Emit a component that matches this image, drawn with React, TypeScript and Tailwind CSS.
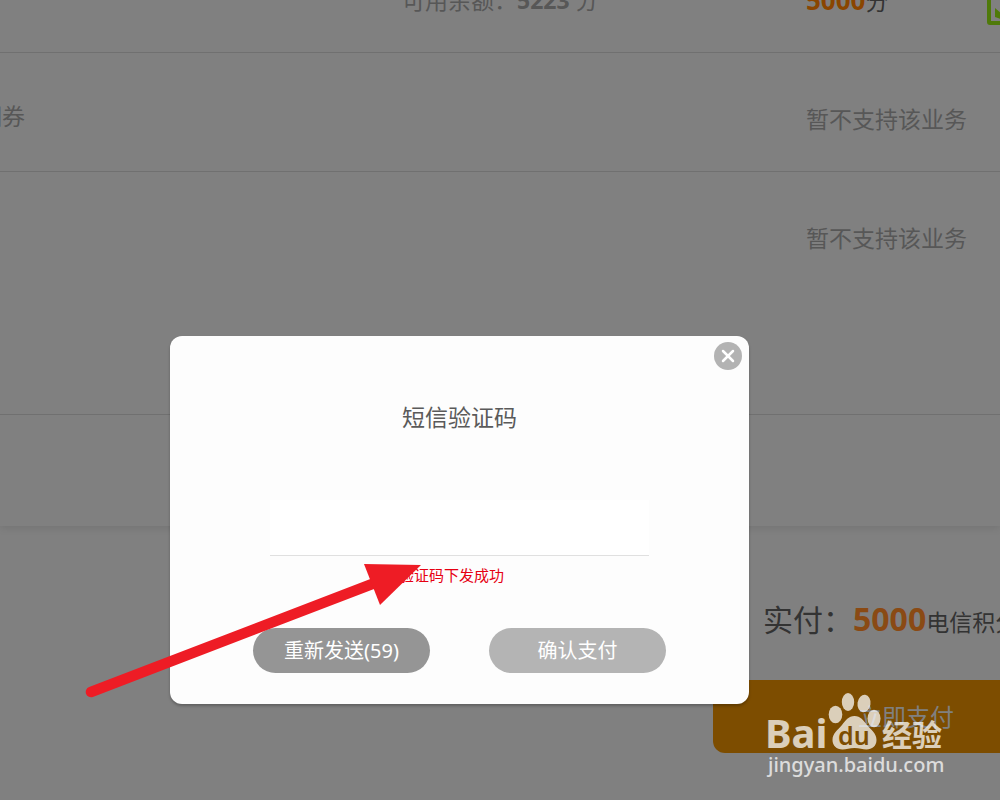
import { X } from 'lucide-react'

const rows = [
  { name: '', balance: '5223', amount: '5000' },
  { name: '期券' },
  { name: '' },
]

function PaymentRow({ name, balance, amount }: { name: string; balance?: string; amount?: string }) {
  return (
    <li className="grid h-[119px] grid-cols-[402px_404px_1fr] border-b border-[#707070] pt-[53px] text-[23px] leading-[26px] text-[#575757] last:h-[243px]">
      <span className="-ml-[21px] -mt-[3px]">{name}</span>
      <span>
        {balance && (
          <>
            可用余额：<strong className="font-bold">{balance}</strong> 分
          </>
        )}
      </span>
      {amount ? (
        <div className="flex items-start justify-between whitespace-nowrap text-[#333]">
          <span>
            <strong className="text-[26px] font-bold text-[#8a4500]">{amount}</strong>分
          </span>
          <label className="relative -mr-[18px] block size-[31px] shrink-0">
            <input
              type="checkbox"
              defaultChecked
              aria-label="使用积分"
              className="mt-[7px] block size-[31px] appearance-none rounded-[3px] border-4 border-[#4f7a0a]"
            />
            <svg viewBox="0 0 31 31" className="pointer-events-none absolute inset-x-0 top-[7px] size-full">
              <path d="M8 14l6 5L26 6v8L14 25l-6-2z" fill="#4f7a0a" />
            </svg>
          </label>
        </div>
      ) : (
        <span className="whitespace-nowrap">暂不支持该业务</span>
      )}
    </li>
  )
}

function SmsDialog() {
  return (
    <form
      role="dialog"
      aria-labelledby="sms-title"
      onSubmit={(e) => e.preventDefault()}
      className="relative w-full max-w-[579px] rounded-xl bg-[#fdfdfd] px-[83px] pb-[31px] pt-[65px] text-center shadow-[0_2px_3px_rgba(0,0,0,0.25)]"
    >
      <button
        type="button"
        aria-label="关闭"
        className="absolute right-[7px] top-[6px] grid size-7 place-items-center rounded-full bg-[#b3b3b3] text-white"
      >
        <X size={20} strokeWidth={3} />
      </button>
      <label id="sms-title" htmlFor="sms-code" className="block text-[23px] leading-8 text-[#5a5a5a]">
        短信验证码
      </label>
      <div className="px-[17px] pt-[67px]">
        <input
          id="sms-code"
          type="text"
          className="block h-14 w-full border-b border-[#e0e0e0] bg-white text-center text-xl outline-none"
        />
      </div>
      <p className="mt-[9px] pr-4 text-[15px] leading-5 text-[#e60012]">验证码下发成功</p>
      <div className="mt-[43px] flex gap-[59px] text-xl text-white">
        <button type="button" className="h-[45px] flex-1 rounded-full bg-[#959595]">
          重新发送(59)
        </button>
        <button type="submit" className="h-[45px] flex-1 rounded-full bg-[#b4b4b4]">
          确认支付
        </button>
      </div>
    </form>
  )
}

function Arrow() {
  return (
    <svg viewBox="0 0 340 140" className="pointer-events-none absolute left-[84px] top-[560px] w-[340px]" fill="#ee1c25">
      <path d="M7 132L296 21" stroke="#ee1c25" strokeWidth="10.500" strokeLinecap="round" />
      <path d="M280 4l57 1-41 40z" />
    </svg>
  )
}

function Watermark() {
  return (
    <svg
      viewBox="0 0 184 90"
      className="pointer-events-none absolute left-[766px] top-[690px] w-[184px] font-['Noto_Sans','Noto_Sans_CJK_SC',sans-serif]"
      fill="#fff"
      opacity="0.73"
    >
      <text x="-1" y="58" fontSize="40" fontWeight="700">
        Bai
      </text>
      <ellipse cx="69.500" cy="24.500" rx="6.800" ry="8.800" />
      <ellipse cx="82" cy="12" rx="6.200" ry="9" />
      <ellipse cx="98" cy="13.500" rx="6.500" ry="8.800" transform="rotate(8 98 13.500)" />
      <ellipse cx="108" cy="28.500" rx="6.500" ry="8.800" />
      <path d="M88.500 26c6 0 9 4.500 12.500 9 4 5 9.500 8 9.500 15 0 6-4.500 9.500-10 9.500-4 0-7-1.500-12-1.500s-8 1.500-12 1.500c-6 0-10-4-10-9.500 0-7 5.500-10 9.500-15 3.500-4.500 6.500-9 12.500-9z" />
      <text x="72" y="55" fontSize="25" fontWeight="600" fill="#7d4d00">
        du
      </text>
      <text x="116" y="56" fontSize="30" fontWeight="700">
        经验
      </text>
      <text x="2" y="82" fontSize="20" fontWeight="500">
        jingyan.baidu.com
      </text>
    </svg>
  )
}

export default function App() {
  return (
    <div className="relative min-h-screen overflow-hidden bg-[#808080] font-['Noto_Sans','Noto_Sans_CJK_SC',sans-serif]">
      <main>
        <section className="-mt-[66px] shadow-[0_2px_8px_rgba(0,0,0,0.1)]">
          <ul>
            {rows.map((row, i) => (
              <PaymentRow key={i} {...row} />
            ))}
          </ul>
          <div className="h-[111px]" />
        </section>
        <div className="flex flex-col whitespace-nowrap pl-[713px] pt-[70px]">
          <p className="pl-[50px] text-[23px] leading-[46px] text-[#333]">
            <span className="text-[30px]">实付：</span>
            <strong className="text-[32px] font-bold text-[#8a4a14]">5000</strong>
            电信积分
          </p>
          <button
            type="button"
            className="mt-[35px] h-[73px] w-[386px] rounded-xl bg-[#7d4d00] text-2xl text-[#808080]"
          >
            立即支付
          </button>
        </div>
      </main>
      <div className="absolute inset-0 pl-[170px] pt-[336px]">
        <SmsDialog />
      </div>
      <Arrow />
      <Watermark />
    </div>
  )
}
